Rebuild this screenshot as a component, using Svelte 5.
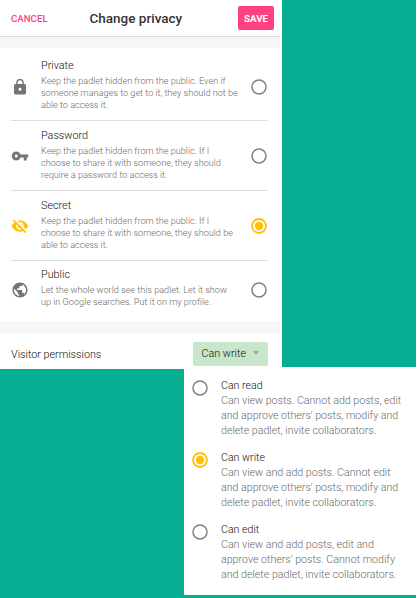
<script lang="ts">
const privacyOptions = [
    { name: 'Private', icon: 'lock', lines: ['Keep the padlet hidden from the public. Even if', 'someone manages to get to it, they should not be', 'able to access it.'] },
    { name: 'Password', icon: 'key', lines: ['Keep the padlet hidden from the public. If I', 'choose to share it with someone, they should', 'require a password to access it.'] },
    { name: 'Secret', icon: 'hidden', lines: ['Keep the padlet hidden from the public. If I', 'choose to share it with someone, they should be', 'able to access it.'] },
    { name: 'Public', icon: 'globe', lines: ['Let the whole world see this padlet. Let it show', 'up in Google searches. Put it on my profile.'] },
]
const permissions = [
    { name: 'Can read', lines: ['Can view posts. Cannot add posts, edit', "and approve others' posts, modify and", 'delete padlet, invite collaborators.'] },
    { name: 'Can write', lines: ['Can view and add posts. Cannot edit', "and approve others' posts, modify and", 'delete padlet, invite collaborators.'] },
    { name: 'Can edit', lines: ['Can view and add posts, edit and', "approve others' posts. Cannot modify", 'and delete padlet, invite collaborators.'] },
]
const icons: Record<string, string> = {
    lock: 'M18 8h-1V6c0-2.76-2.24-5-5-5S7 3.24 7 6v2H6c-1.1 0-2 .9-2 2v10c0 1.1.9 2 2 2h12c1.1 0 2-.9 2-2V10c0-1.1-.9-2-2-2zm-6 9c-1.1 0-2-.9-2-2s.9-2 2-2 2 .9 2 2-.9 2-2 2zm3.1-9H8.9V6c0-1.71 1.39-3.1 3.1-3.1 1.71 0 3.1 1.39 3.1 3.1v2z',
    key: 'M12.65 10C11.83 7.67 9.61 6 7 6c-3.31 0-6 2.69-6 6s2.69 6 6 6c2.61 0 4.83-1.67 5.65-4H17v4h4v-4h2v-4H12.65zM7 14c-1.1 0-2-.9-2-2s.9-2 2-2 2 .9 2 2-.9 2-2 2z',
    hidden: 'M12 4.5C7 4.5 2.73 7.61 1 12c1.73 4.39 6 7.5 11 7.5s9.27-3.11 11-7.5c-1.73-4.39-6-7.5-11-7.5zM12 17c-2.76 0-5-2.24-5-5s2.24-5 5-5 5 2.24 5 5-2.24 5-5 5zm0-8c-1.66 0-3 1.34-3 3s1.34 3 3 3 3-1.34 3-3-1.34-3-3-3z',
    globe: 'M12 2C6.48 2 2 6.48 2 12s4.48 10 10 10 10-4.48 10-10S17.52 2 12 2zm-1 17.93c-3.95-.49-7-3.85-7-7.93 0-.62.08-1.21.21-1.79L9 15v1c0 1.1.9 2 2 2v1.93zm6.9-2.54c-.26-.81-1-1.39-1.9-1.39h-1v-3c0-.55-.45-1-1-1H8v-2h2c.55 0 1-.45 1-1V7h2c1.1 0 2-.9 2-2v-.41c2.93 1.19 5 4.06 5 7.41 0 2.08-.8 3.97-2.1 5.39z',
}

let privacy = $state('Secret');
let permission = $state('Can write');
</script>

{#snippet description(lines: string[])}
    {#each lines as line}
        <p class="line">{line}</p>
    {/each}
{/snippet}

{#snippet radio(checked: boolean)}
    <svg class="radio" class:checked viewBox="0 0 16 16">
        <circle class="ring" cx="8" cy="8" r="7" />
        {#if checked}
            <circle class="dot" cx="8" cy="8" r="4.2" />
        {/if}
    </svg>
{/snippet}

<div class="page">
    <div class="panel">
        <header>
            <button class="cancel">CANCEL</button>
            <h2>Change privacy</h2>
            <button class="save">SAVE</button>
        </header>
        <div class="band"></div>
        <div class="options">
            {#each privacyOptions as option}
                <button class="option" class:selected={privacy === option.name} onclick={() => privacy = option.name}>
                    <svg class="icon" viewBox="0 0 24 24">
                        <path d={icons[option.icon]} />
                        {#if option.icon === 'hidden'}
                            <path class="slash-gap" d="M4.2 2.2l17 17" />
                            <path class="slash" d="M2.7 3.6l17.2 17.2" />
                        {/if}
                    </svg>
                    <div class="text">
                        <h3>{option.name}</h3>
                        {@render description(option.lines)}
                    </div>
                    {@render radio(privacy === option.name)}
                </button>
            {/each}
        </div>
        <div class="band wide"></div>
        <div class="visitor">
            <span>Visitor permissions</span>
            <button class="select">{permission}<i class="arrow"></i></button>
        </div>
    </div>
    <div class="menu">
        {#each permissions as item}
            <button class="item" onclick={() => permission = item.name}>
                {@render radio(permission === item.name)}
                <div>
                    <h4>{item.name}</h4>
                    {@render description(item.lines)}
                </div>
            </button>
        {/each}
    </div>
</div>

<style>
:global(body) {
    background: #fff;
}
.page {
    position: relative;
    width: 416px;
    height: 598px;
    overflow: hidden;
    background: #06ae91;
    font-family: Roboto, sans-serif;
    font-weight: 300;
    color: #111;
}
h2, h3, h4, p {
    margin: 0;
}
button {
    margin: 0;
    padding: 0;
    border: none;
    background: transparent;
    font: inherit;
    color: inherit;
    text-align: left;
}
.panel {
    width: 280px;
    height: 369px;
    padding-right: 2px;
    background: #fff;
}
header {
    display: flex;
    align-items: center;
    justify-content: space-between;
    height: 36px;
    padding: 0 6px 0 11px;
    border-bottom: 1px solid #dcdcdc;
}
h2 {
    font-size: 13.5px;
    font-weight: 500;
    color: #333;
    margin-left: -14px;
}
.cancel {
    font-size: 9.7px;
    font-weight: 500;
    color: #ff4081;
}
.save {
    width: 36px;
    height: 24px;
    border-radius: 2px;
    background: #ff4081;
    color: #fff;
    font-size: 9.7px;
    font-weight: 700;
    text-align: center;
}
.band {
    height: 11px;
    background: #f7f7f7;
}
.band.wide {
    height: 12px;
}
.options {
    height: 270px;
    padding: 3px 12px 0 11px;
}
.option {
    display: flex;
    align-items: center;
    width: 100%;
    height: 70px;
    border-bottom: 1px solid #dedede;
}
.option:last-child {
    height: 57px;
    border-bottom: none;
}
.option:first-child .icon, .option:first-child .radio {
    margin-top: 2px;
}
.icon {
    width: 18px;
    height: 18px;
    flex: none;
    fill: #757575;
}
.selected .icon {
    fill: #ffc107;
}
.slash, .slash-gap {
    fill: none;
    stroke: #ffc107;
    stroke-width: 2;
}
.slash-gap {
    stroke: #fff;
}
.text {
    flex: 1;
    padding: 0 0 1px 12px;
}
.option:last-child .text {
    padding-bottom: 4px;
}
h3 {
    margin-bottom: 2px;
    font-size: 10.8px;
    line-height: 14px;
    font-weight: 300;
}
.line {
    font-size: 9.13px;
    line-height: 12px;
    color: #6a6a6a;
    white-space: nowrap;
}
.radio {
    width: 16px;
    height: 16px;
    flex: none;
    margin-right: 1px;
}
.ring {
    fill: none;
    stroke: #808080;
    stroke-width: 1.5;
}
.checked .ring {
    stroke: #ffc107;
    stroke-width: 1.8;
}
.dot {
    fill: #ffc107;
}
.visitor {
    display: flex;
    align-items: center;
    justify-content: space-between;
    height: 36px;
    padding: 3px 12px 0 11px;
    font-size: 10.75px;
}
.select {
    display: flex;
    align-items: center;
    justify-content: space-between;
    box-sizing: border-box;
    width: 75px;
    height: 24px;
    padding: 0 9px 2px 8.5px;
    border-radius: 2px;
    background: #c8e6c9;
}
.arrow {
    border: 3.5px solid transparent;
    border-top: 4px solid #a3a8ab;
    border-bottom: none;
}
/* dropdown opened over the lower right corner of the panel */
.menu {
    position: absolute;
    left: 184px;
    top: 367px;
    box-sizing: border-box;
    width: 232px;
    height: 228px;
    padding: 11px 8px;
    background: #fff;
}
.item {
    display: flex;
    width: 100%;
    height: 72px;
}
.item .radio {
    margin: 2px 13px 0 0;
}
h4 {
    font-size: 10.65px;
    line-height: 15px;
    font-weight: 300;
}
.item .line {
    font-size: 10.65px;
    line-height: 15px;
}
</style>
